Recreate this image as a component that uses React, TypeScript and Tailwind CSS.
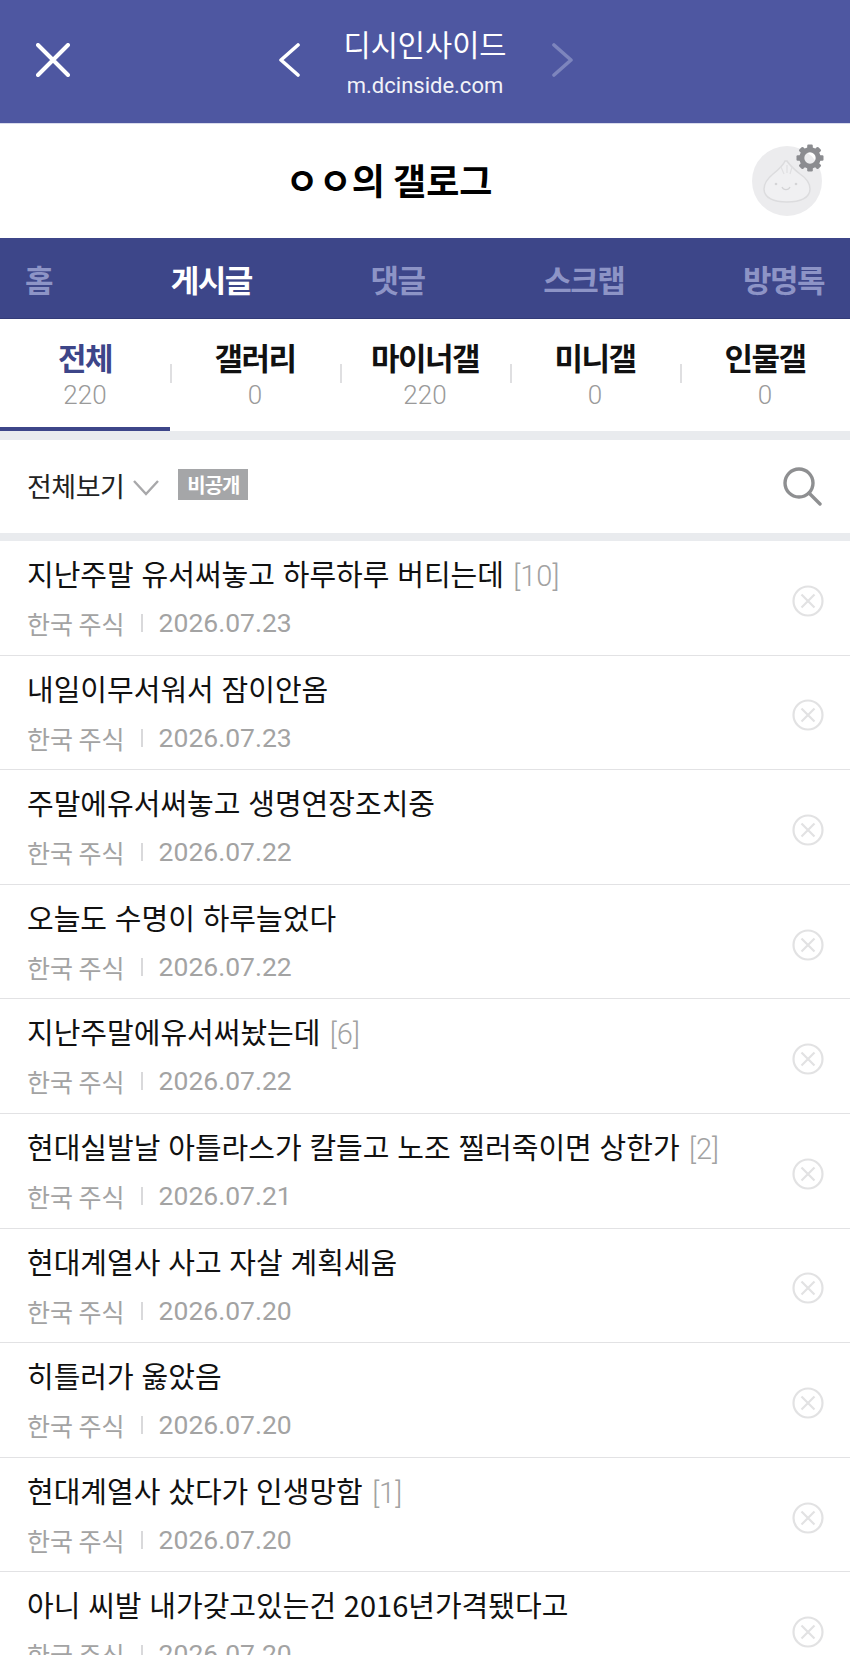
import React from "react";

const KR = "font-['Noto_Sans_CJK_KR','Noto_Sans',sans-serif]";

const rows: { t: string; n?: number; d: string }[] = [
  { t: "지난주말 유서써놓고 하루하루 버티는데", n: 10, d: "2026.07.23" },
  { t: "내일이무서워서 잠이안옴", d: "2026.07.23" },
  { t: "주말에유서써놓고 생명연장조치중", d: "2026.07.22" },
  { t: "오늘도 수명이 하루늘었다", d: "2026.07.22" },
  { t: "지난주말에유서써놨는데", n: 6, d: "2026.07.22" },
  { t: "현대실발날 아틀라스가 칼들고 노조 찔러죽이면 상한가", n: 2, d: "2026.07.21" },
  { t: "현대계열사 사고 자살 계획세움", d: "2026.07.20" },
  { t: "히틀러가 옳았음", d: "2026.07.20" },
  { t: "현대계열사 샀다가 인생망함", n: 1, d: "2026.07.20" },
  { t: "아니 씨발 내가갖고있는건 2016년가격됐다고", d: "2026.07.20" },
];

const tabs = [
  { l: "전체", c: "220" },
  { l: "갤러리", c: "0" },
  { l: "마이너갤", c: "220" },
  { l: "미니갤", c: "0" },
  { l: "인물갤", c: "0" },
];

function Dumpling() {
  return (
    <svg viewBox="0 0 70 70" className="w-[70px] h-[70px]" fill="none">
      <circle cx="35" cy="35" r="35" fill="#ececee" />
      <path
        d="M33 15c-2 5-7 9-12 13-6 5-9 9-9 15 0 9 10 13 23 13s23-4 23-13c0-7-4-11-10-15-5-4-10-8-13-13h-2z"
        fill="#f0f0f2"
        stroke="#dcdcde"
        strokeWidth="1.5"
      />
      <path d="M29 21l3 7M35 19v8M40 21l-2 7" stroke="#e0e0e2" strokeWidth="1.2" />
      <circle cx="24" cy="38" r="1.3" fill="#d4d4d6" />
      <circle cx="44" cy="38" r="1.3" fill="#d4d4d6" />
      <path d="M30 41c1.5 3.5 6.5 3.5 8 0" stroke="#d4d4d6" strokeWidth="1.3" />
    </svg>
  );
}

function Gear() {
  const teeth = [0, 45, 90, 135, 180, 225, 270, 315];
  return (
    <svg viewBox="0 0 28 28" className="w-[28px] h-[28px]">
      {teeth.map((a) => (
        <rect key={a} x="11.2" y="0.5" width="5.6" height="6" rx="1.2" fill="#8b8c90" transform={`rotate(${a} 14 14)`} />
      ))}
      <circle cx="14" cy="14" r="8.2" fill="none" stroke="#8b8c90" strokeWidth="5" />
    </svg>
  );
}

function CloseCircle() {
  return (
    <svg viewBox="0 0 32 32" className="w-[32px] h-[32px]" fill="none" stroke="#e2e2e3" strokeWidth="2.2">
      <circle cx="16" cy="16" r="14.5" />
      <path d="M9.5 9.5l13 13M22.5 9.5l-13 13" />
    </svg>
  );
}

export default function App() {
  return (
    <div className={`w-[850px] h-[1655px] overflow-hidden bg-white ${KR}`}>
      {/* browser bar */}
      <div className="h-[124px] bg-[#4e57a1] flex items-center pl-[36px] border-b border-[#d9dbec]">
        <svg viewBox="0 0 34 34" className="w-[34px] h-[34px] mb-[4px]" fill="none" stroke="#fff" strokeWidth="4" strokeLinecap="round">
          <path d="M2 2l30 30M32 2L2 32" />
        </svg>
        <svg viewBox="0 0 22 34" className="w-[22px] h-[34px] ml-[208px] mb-[4px]" fill="none" stroke="#fff" strokeWidth="3.6" strokeLinecap="round" strokeLinejoin="round">
          <path d="M20 2L3 17l17 15" />
        </svg>
        <div className="w-[160px] ml-[45px] flex flex-col items-center text-white">
          <div className="text-[29.5px] leading-[40px] mb-[4px] whitespace-nowrap">디시인사이드</div>
          <div className="text-[22px] leading-[28px] mt-[5px] font-['Roboto','Noto_Sans',sans-serif] text-[#f1f2f8] whitespace-nowrap">m.dcinside.com</div>
        </div>
        <svg viewBox="0 0 22 34" className="w-[22px] h-[34px] ml-[47px] mb-[4px]" fill="none" stroke="#7d85bd" strokeWidth="3.6" strokeLinecap="round" strokeLinejoin="round">
          <path d="M2 2l17 15L2 32" />
        </svg>
      </div>

      {/* title */}
      <div className="h-[114px] flex items-center pr-[28px]">
        <div className="flex-1 pl-[26px] pb-[4px] text-center text-[36px] font-bold text-black leading-none">ㅇㅇ의 갤로그</div>
        <div className="relative w-[70px] h-[70px]">
          <Dumpling />
          <div className="absolute right-[-2px] top-[-2px]">
            <Gear />
          </div>
        </div>
      </div>

      {/* nav */}
      <div className="h-[81px] bg-[#3d4689] flex items-center justify-between pl-[25px] pr-[26px] pt-[2px] text-[31px] font-bold text-[#8d94c6] tracking-[-1.5px] border-b border-[#333b78]">
        <span>홈</span>
        <span className="text-white">게시글</span>
        <span>댓글</span>
        <span>스크랩</span>
        <span>방명록</span>
      </div>

      {/* tabs */}
      <div className="h-[112px] flex">
        {tabs.map((t, i) => (
          <div key={t.l} className={`relative flex-1 flex flex-col items-center pt-[16px] ${i === 0 ? "border-b-[4px] border-[#3d4689]" : ""}`}>
            <div className={`text-[31px] leading-[44px] font-bold tracking-[-1.5px] ${i === 0 ? "text-[#3d4689]" : "text-[#111]"}`}>{t.l}</div>
            <div className="text-[26px] leading-[32px] text-[#9a9a9a] font-['Roboto',sans-serif] font-light">{t.c}</div>
            {i > 0 && <span className="absolute left-0 top-[45px] w-[2px] h-[19px] bg-[#dfdfe1]" />}
          </div>
        ))}
      </div>
      <div className="h-[9px] bg-[#e9ebee]" />

      {/* filter */}
      <div className="h-[93px] flex items-center pl-[27px] pr-[28px]">
        <span className="text-[27px] tracking-[-0.5px] text-[#222]">전체보기</span>
        <svg viewBox="0 0 26 16" className="w-[26px] h-[16px] ml-[9px] mt-[2px]" fill="none" stroke="#a8a8aa" strokeWidth="2.4">
          <path d="M1 1l12 13L25 1" />
        </svg>
        <span className="ml-[19px] mb-[4px] w-[70px] h-[31px] bg-[#a5a6a8] text-white text-[20px] font-bold flex items-center justify-center tracking-[-1px] leading-none">비공개</span>
        <svg viewBox="0 0 40 40" className="w-[40px] h-[40px] ml-auto mb-[2px]" fill="none" stroke="#8e8f91" strokeWidth="3.4" strokeLinecap="round">
          <circle cx="17" cy="17" r="14" />
          <path d="M27 27l11 11" />
        </svg>
      </div>
      <div className="h-[8px] bg-[#e9ebee]" />

      {/* list */}
      {rows.map((r) => (
        <div key={r.t} className="h-[114.6px] border-b border-[#e2e2e4] flex items-center pl-[27px] pr-[26px]">
          <div className="flex-1 min-w-0 self-start pt-[10px]">
            <div className="h-[44px] text-[29px] leading-[44px] text-[#111] whitespace-nowrap [word-spacing:1.3px]">
              {r.t}
              {r.n !== undefined && <span className="ml-[1px] text-[#a2a2a2] font-['Roboto',sans-serif] font-light leading-none"> [{r.n}]</span>}
            </div>
            <div className="flex items-center mt-[9px] h-[38px] text-[25px] leading-[38px] text-[#a3a3a3]">
              <span>한국 주식</span>
              <span className="w-[2px] h-[18px] bg-[#d9d9db] mx-[16px]" />
              <span className="text-[26.5px] font-['Roboto',sans-serif]">{r.d}</span>
            </div>
          </div>
          <div className="mt-[6px]">
            <CloseCircle />
          </div>
        </div>
      ))}
    </div>
  );
}
